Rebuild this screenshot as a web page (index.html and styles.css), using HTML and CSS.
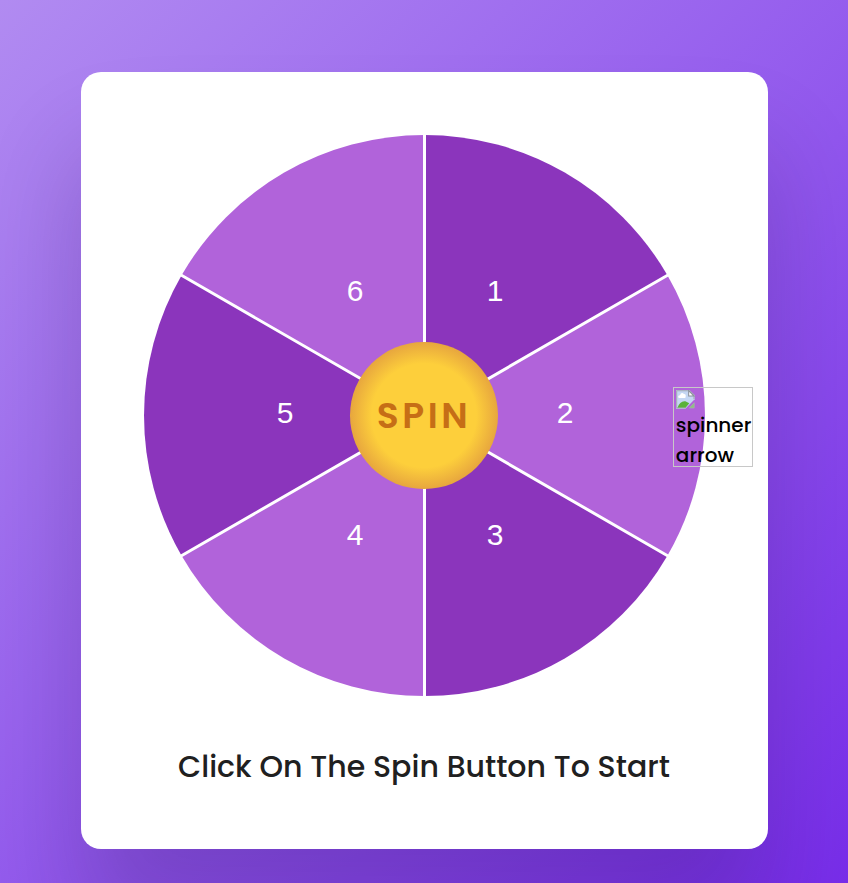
FILE: index.html
```
<!DOCTYPE html>
<html lang="en">
<head>
<meta charset="utf-8">
<meta name="viewport" content="width=device-width, initial-scale=1">
<title>Spin Wheel</title>
<link rel="stylesheet" href="styles.css">
</head>
<body>
<main class="wrapper">
  <div class="container">
    <svg class="wheel" viewBox="0 0 567 567" role="img" aria-label="Wheel with six numbered segments">
      <g class="slices">
        <path class="dark" d="M283.5 283.5V3A280.5 280.5 0 0 1 526.4 143.25Z"/>
        <path class="light" d="M283.5 283.5L526.4 143.25A280.5 280.5 0 0 1 526.4 423.75Z"/>
        <path class="dark" d="M283.5 283.5L526.4 423.75A280.5 280.5 0 0 1 283.5 564Z"/>
        <path class="light" d="M283.5 283.5V564A280.5 280.5 0 0 1 40.6 423.75Z"/>
        <path class="dark" d="M283.5 283.5L40.6 423.75A280.5 280.5 0 0 1 40.6 143.25Z"/>
        <path class="light" d="M283.5 283.5L40.6 143.25A280.5 280.5 0 0 1 283.5 3Z"/>
      </g>
      <path class="dividers" d="M283.5 2V565M40 143L527 424M40 424L527 143"/>
      <g class="numbers">
        <text x="354" y="169">1</text>
        <text x="424" y="291">2</text>
        <text x="354" y="413">3</text>
        <text x="214" y="413">4</text>
        <text x="144" y="291">5</text>
        <text x="214" y="169">6</text>
      </g>
    </svg>
    <button class="spin-btn" type="button">Spin</button>
    <div class="arrow">
      <svg class="arrow-icon" viewBox="1 1 15 15" aria-hidden="true">
        <path fill="#c5d7f3" d="M1 1H11L15 5V8L8 15H1Z"/>
        <path fill="#fff" d="M3 7Q2 5 4 5Q5 2 7 4Q9 4 8 7Z"/>
        <path fill="#5ab23a" d="M2 14.500Q4 9 8 9.500L11 11L8 14.500Z"/>
        <path fill="none" stroke="#a4aab4" stroke-width=".8" d="M8 14.5H1.500V1.500H11L14.500 5V8"/>
        <path fill="#fff" stroke="#8c929c" stroke-width=".8" d="M10.500 1.500V5.500H14.500Z"/>
        <path fill="#8fc47c" stroke="#a4aab4" stroke-width=".6" d="M14.700 10.500V14.500H11Z"/>
      </svg>
      <span>spinner arrow</span>
    </div>
  </div>
  <p class="final-value">Click On The Spin Button To Start</p>
</main>
</body>
</html>
```
FILE: styles.css
```
* {
  box-sizing: border-box;
  margin: 0;
  padding: 0;
}

html {
  font-size: 20px;
}

body {
  min-height: 100vh;
  padding-top: 72px;
  overflow: hidden;
  background: linear-gradient(135deg, #b18bf1, #782dea) no-repeat;
  font-family: Poppins, Inter, "Open Sans", sans-serif;
  color: #000;
}

.wrapper {
  width: 90%;
  max-width: 687px;
  margin: 0 auto;
  padding: 60px;
  border-radius: 20px;
  background: #fff;
  box-shadow: 0 80px 100px rgba(27, 8, 53, 0.2);
}

.container {
  position: relative;
}

.wheel {
  display: block;
  width: 100%;
}

.dark {
  fill: #8b35bc;
}

.light {
  fill: #b163da;
}

.dividers {
  fill: none;
  stroke: #fff;
  stroke-width: 3px;
}

.numbers {
  fill: #fff;
  font: 30px "Liberation Sans", Arial, sans-serif;
  text-anchor: middle;
}

.spin-btn {
  position: absolute;
  inset: 0;
  width: 26%;
  aspect-ratio: 1;
  margin: auto;
  border: 0;
  border-radius: 50%;
  background: radial-gradient(#fdcf3b 50%, #d88a40 85%);
  color: #c66e16;
  font-family: inherit;
  font-size: 36px;
  font-weight: 600;
  letter-spacing: 0.1em;
  text-transform: uppercase;
  cursor: pointer;
}

.arrow {
  position: absolute;
  top: 45%;
  right: -8%;
  width: 80px;
  height: 80px;
  padding: 2px;
  border: 1px solid #c8c8c8;
  font-size: 20px;
  font-weight: 500;
  line-height: 30px;
}

.arrow-icon {
  display: block;
  width: 20px;
  height: 20px;
}

.arrow span {
  display: block;
}

.final-value {
  margin-top: 45px;
  color: #202020;
  font-size: 30px;
  font-weight: 500;
  line-height: 45px;
  text-align: center;
}
```
